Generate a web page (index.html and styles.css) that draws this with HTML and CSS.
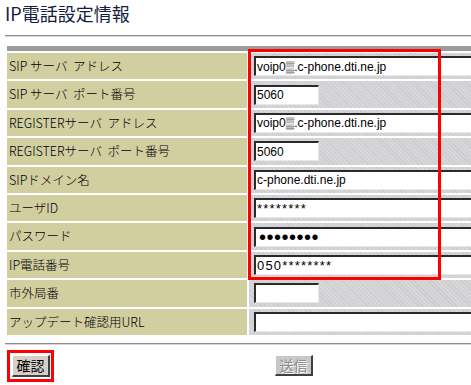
FILE: index.html
```html
<!DOCTYPE html>
<html lang="ja">

<head>
    <meta charset="UTF-8" />
    <title>IP電話設定情報</title>
    <link rel="stylesheet" href="styles.css">
</head>

<body>
    <div class="page">
        <h1 class="title">IP電話設定情報</h1>
        <div class="rule"></div>

        <div class="form-grid">
            <div class="head-bar"></div>

            <div class="label">SIP サーバ&nbsp; アドレス</div>
            <div class="value"><input class="field long" type="text" value="voip0▒.c-phone.dti.ne.jp" /></div>

            <div class="label">SIP サーバ&nbsp; ポート番号</div>
            <div class="value"><input class="field short" type="text" value="5060" /></div>

            <div class="label">REGISTERサーバ&nbsp; アドレス</div>
            <div class="value"><input class="field long" type="text" value="voip0▒.c-phone.dti.ne.jp" /></div>

            <div class="label">REGISTERサーバ&nbsp; ポート番号</div>
            <div class="value"><input class="field short" type="text" value="5060" /></div>

            <div class="label">SIPドメイン名</div>
            <div class="value"><input class="field long" type="text" value="c-phone.dti.ne.jp" /></div>

            <div class="label">ユーザID</div>
            <div class="value"><input class="field long stars" type="text" value="********" /></div>

            <div class="label">パスワード</div>
            <div class="value"><input class="field long secret" type="password" value="abcdefgh" /></div>

            <div class="label">IP電話番号</div>
            <div class="value"><input class="field long stars" type="text" value="050********" /></div>

            <div class="label">市外局番</div>
            <div class="value"><input class="field short" type="text" value="" /></div>

            <div class="label">アップデート確認用URL</div>
            <div class="value"><input class="field long" type="text" value="" /></div>
        </div>

        <div class="rule bottom"></div>

        <div class="actions">
            <span class="mark"><button class="btn">確認</button></span>
            <button class="btn send" disabled>送信</button>
        </div>

        <div class="mark-box"></div>
    </div>
</body>

</html>
```

FILE: styles.css
```css
body {
    margin: 0;
    background: #fff;
    font-family: "Noto Sans CJK JP", "Liberation Sans", sans-serif;
    overflow: hidden;
}

.page {
    position: relative;
    width: 471px;
    height: 385px;
    padding-left: 5px;
    box-sizing: border-box;
    overflow: hidden;
}

.title {
    margin: 0;
    padding-top: 2px;
    height: 24px;
    font-size: 18px;
    line-height: 22px;
    font-weight: normal;
    letter-spacing: 0;
    color: #14213d;
}

.rule {
    margin-top: 9px;
    width: 520px;
    height: 0;
    border-top: 1px solid #8e8e8e;
    border-bottom: 1px solid #d6d6d6;
}

.rule.bottom {
    margin-top: 6px;
}

.form-grid {
    display: grid;
    grid-template-columns: 240px 300px;
    grid-template-rows: 5px repeat(10, 26.4px);
    gap: 2px;
    padding: 2px;
    margin-top: 7px;
    width: 560px;
}

.head-bar {
    grid-column: 1 / 3;
    background: #9b9b9b;
}

.label {
    background: #d1cea0;
    padding-left: 2px;
    font-size: 12.5px;
    font-weight: 300;
    line-height: 26px;
    color: #000;
    white-space: nowrap;
}

.value {
    display: flex;
    align-items: center;
    padding-left: 5px;
    background-color: #d7d7da;
    background-image: repeating-linear-gradient(45deg, rgba(0, 0, 0, 0.05) 0 1px, transparent 1px 3px);
}

.field {
    box-sizing: border-box;
    height: 20px;
    margin: 0;
    padding: 0 1px;
    border-top: 2px solid #2a2a2a;
    border-left: 2px solid #2a2a2a;
    border-right: 1px solid #e8e8e8;
    border-bottom: 1px solid #e8e8e8;
    background: #fff;
    font-family: "Liberation Sans", sans-serif;
    font-size: 12px;
    color: #000;
    outline: none;
}

.field.long {
    width: 260px;
}

.field.short {
    width: 65px;
}

.field.stars {
    font-size: 13px;
    letter-spacing: 1.2px;
}

.field.secret {
    font-size: 20px;
    letter-spacing: 0.5px;
    padding-left: 3px;
}

.actions {
    display: flex;
    align-items: center;
    margin-top: 5px;
    padding-left: 2px;
}

.mark {
    display: inline-flex;
    border: 3px solid #f00;
    padding: 2px 1px 2px 2px;
}

.btn {
    box-sizing: border-box;
    width: 38px;
    height: 22px;
    padding: 0;
    background: #d4d0c8;
    border-top: 1px solid #fff;
    border-left: 1px solid #fff;
    border-right: 2px solid #404040;
    border-bottom: 2px solid #404040;
    font-family: "Noto Sans CJK JP", sans-serif;
    font-size: 14px;
    line-height: 18px;
    color: #000;
}

.btn.send {
    width: 38px;
    height: 21px;
    margin-left: 221px;
    color: #8c8c8c;
    text-shadow: 1px 1px 0 #fff;
    background: #c8c8c8;
}

.mark-box {
    position: absolute;
    left: 248px;
    top: 49px;
    width: 193px;
    height: 231px;
    box-sizing: border-box;
    border: 3px solid #f00;
}
```
